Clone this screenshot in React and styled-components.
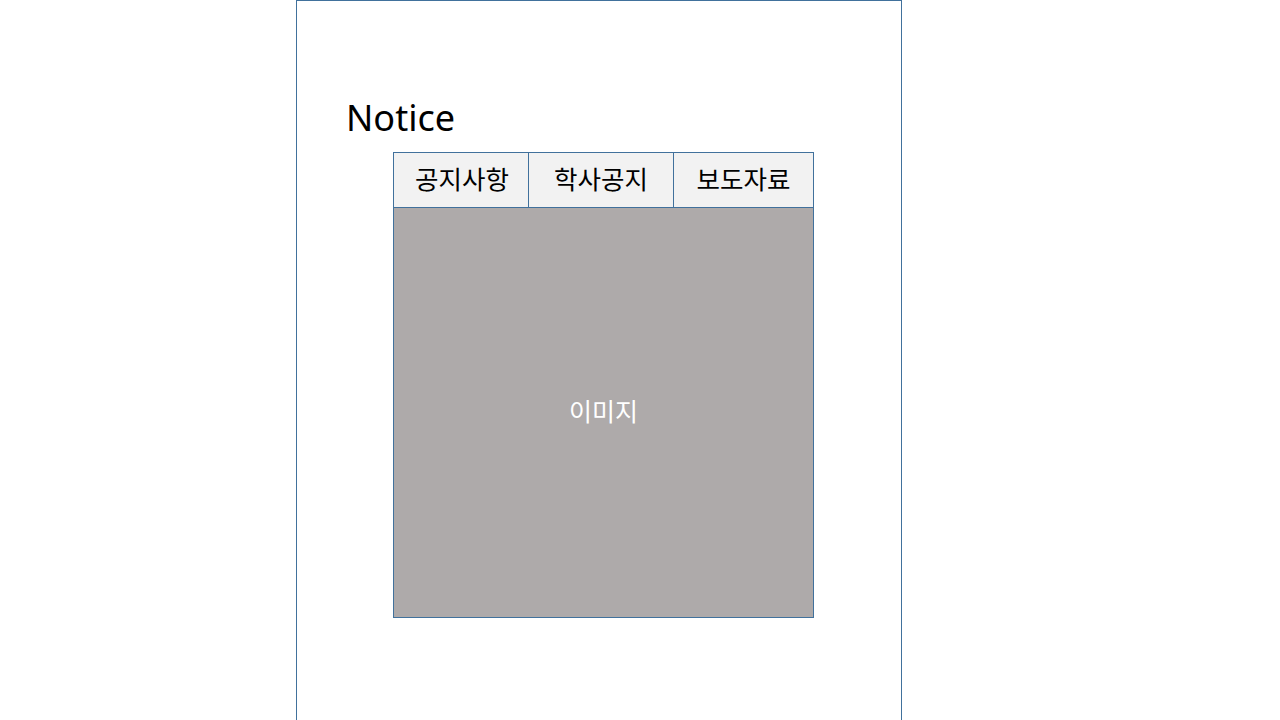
import React from "react";
import styled, { createGlobalStyle } from "styled-components";

const Global = createGlobalStyle`
  html, body {
    margin: 0;
    padding: 0;
    background: #ffffff;
    overflow: hidden;
  }
  body {
    font-family: "Noto Sans", "Noto Sans CJK KR", sans-serif;
  }
`;

const Page = styled.div`
  width: 1280px;
  height: 720px;
  display: flex;
`;

const Frame = styled.section`
  margin-left: 296px;
  width: 604px;
  height: 740px;
  border: 1px solid #41719c;
  box-sizing: content-box;
  display: flex;
  flex-direction: column;
`;

const Title = styled.h1`
  margin: 93px 0 0 49px;
  font-family: "Noto Sans", "Noto Sans CJK KR", sans-serif;
  font-weight: 400;
  font-size: 36px;
  line-height: 48px;
  height: 48px;
  color: #000000;
`;

const Widget = styled.div`
  margin: 10px 0 0 96px;
  width: 421px;
  display: flex;
  flex-direction: column;
`;

const TabRow = styled.div`
  display: grid;
  grid-template-columns: 134px 144px 139px;
  column-gap: 1px;
  background: #41719c;
  border: 1px solid #41719c;
  height: 54px;
`;

const Tab = styled.div`
  background: #f2f2f2;
  display: flex;
  align-items: center;
  justify-content: center;
  font-family: "Noto Sans CJK KR", sans-serif;
  font-size: 25.5px;
  color: #000000;
  padding-bottom: 5px;
  padding-left: ${(p) => p.$shift || 0}px;
`;

const ImageBox = styled.div`
  height: 409px;
  background: #aeaaaa;
  border: 1px solid #41719c;
  border-top: none;
  display: flex;
  align-items: center;
  justify-content: center;
  font-family: "Noto Sans CJK KR", sans-serif;
  font-size: 25px;
  color: #ffffff;
  padding-bottom: 6px;
  box-sizing: border-box;
  height: 410px;
`;

export default function App() {
  return (
    <>
      <Global />
      <Page>
        <Frame>
          <Title>Notice</Title>
          <Widget>
            <TabRow>
              <Tab $shift={2}>공지사항</Tab>
              <Tab>학사공지</Tab>
              <Tab>보도자료</Tab>
            </TabRow>
            <ImageBox>이미지</ImageBox>
          </Widget>
        </Frame>
      </Page>
    </>
  );
}
